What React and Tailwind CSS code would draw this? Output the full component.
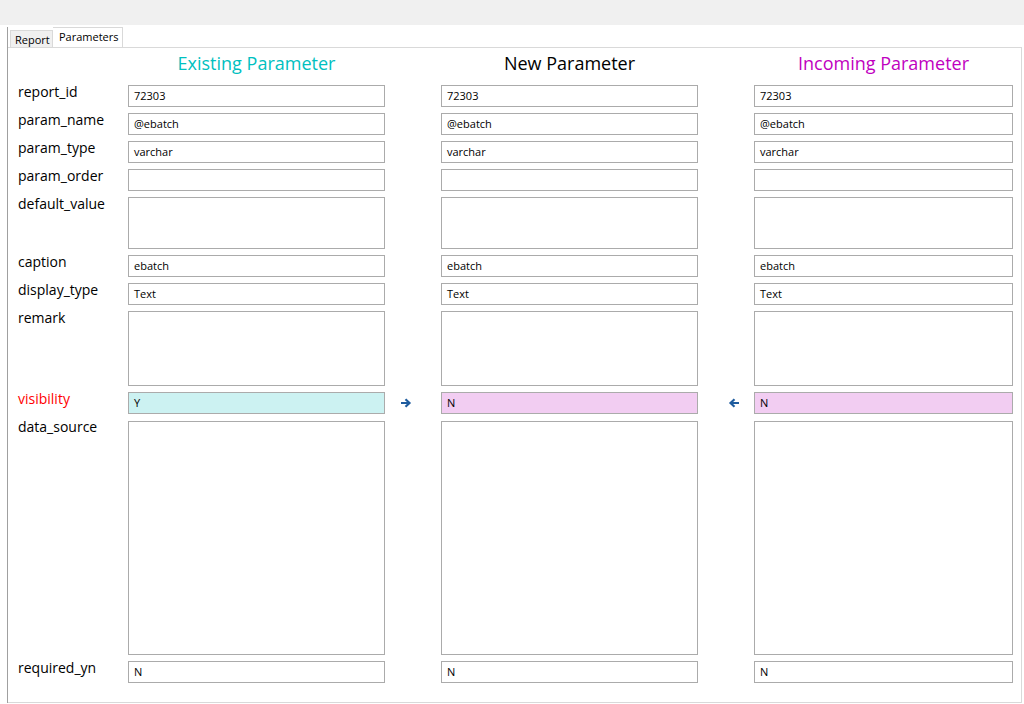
import React from 'react';

const rows = [
  { name: 'report_id', h: 'h-[22px]', values: ['72303', '72303', '72303'] },
  { name: 'param_name', h: 'h-[22px]', values: ['@ebatch', '@ebatch', '@ebatch'] },
  { name: 'param_type', h: 'h-[22px]', values: ['varchar', 'varchar', 'varchar'] },
  { name: 'param_order', h: 'h-[22px]', values: ['', '', ''] },
  { name: 'default_value', h: 'h-[52px]', values: ['', '', ''] },
  { name: 'caption', h: 'h-[22px]', values: ['ebatch', 'ebatch', 'ebatch'] },
  { name: 'display_type', h: 'h-[22px]', values: ['Text', 'Text', 'Text'] },
  { name: 'remark', h: 'h-[75px]', values: ['', '', ''] },
  { name: 'visibility', h: 'h-[22px]', values: ['Y', 'N', 'N'], changed: true },
  { name: 'data_source', h: 'h-[234px]', values: ['', '', ''], spaced: true },
  { name: 'required_yn', h: 'h-[22px]', values: ['N', 'N', 'N'] },
];

const ArrowRight = () => (
  <svg width="12" height="10" viewBox="0 0 12 10" className="text-[#1f5c9e]">
    <path d="M1 5 H9.5 M5.5 1.2 L9.5 5 L5.5 8.8" fill="none" stroke="currentColor" strokeWidth="2.2" />
  </svg>
);

const ArrowLeft = () => (
  <svg width="12" height="10" viewBox="0 0 12 10" className="text-[#1f5c9e]">
    <path d="M11 5 H2.5 M6.5 1.2 L2.5 5 L6.5 8.8" fill="none" stroke="currentColor" strokeWidth="2.2" />
  </svg>
);

const Field = ({ value, h, bg = 'bg-white', extra = '' }) => (
  <div className={`${h} ${bg} ${extra} border border-[#ababab] px-[5px] flex items-start`}>
    <span className="text-[11px] leading-[20px] text-black">{value}</span>
  </div>
);

export default function App() {
  return (
    <div className="w-[1024px] h-[704px] bg-white overflow-hidden font-['Open_Sans',sans-serif]">
      <div className="h-[25px] bg-[#f0f0f0]" />
      <div className="ml-[7px] mt-[2px] h-[676px] border-l border-[#a0a0a0] flex flex-col">
        {/* tab strip */}
        <div className="h-[20px] flex items-end pl-[2px]">
          <div className="w-[43px] h-[17px] bg-[#f0f0f0] border border-b-0 border-[#d9d9d9] text-[11px] leading-[17px] text-black pl-[4px]">
            Report
          </div>
          <div className="w-[70px] h-[20px] bg-white border border-b-0 border-l-0 border-[#d9d9d9] text-[11px] leading-[17px] text-black pl-[6px]">
            Parameters
          </div>
        </div>

        {/* parameter comparison panel */}
        <div className="w-[1014px] flex-1 border-t border-r border-b border-[#d9d9d9] pl-[10px]">
          <div className="grid grid-cols-[110px_257px_56px_257px_56px_259px] gap-y-[6px]">
            <div className="h-[31px]" />
            <div className="h-[31px] flex items-center justify-center text-[18px] text-[#00c0c0]">
              Existing Parameter
            </div>
            <div />
            <div className="h-[31px] flex items-center justify-center text-[18px] text-black">
              New Parameter
            </div>
            <div />
            <div className="h-[31px] flex items-center justify-center text-[18px] text-[#c000c0]">
              Incoming Parameter
            </div>

            {rows.map((row) => {
              const gap = row.spaced ? 'mt-[1px]' : '';
              return (
                <React.Fragment key={row.name}>
                  <div
                    className={`text-[14px] leading-[16px] -mt-[1px] ${
                      row.changed ? 'text-[#ff0000]' : 'text-black'
                    }`}
                  >
                    {row.name}
                  </div>
                  <Field value={row.values[0]} h={row.h} extra={gap} bg={row.changed ? 'bg-[#ccf2f2]' : 'bg-white'} />
                  <div className={`flex items-center justify-start pl-[15px] ${gap}`}>{row.changed && <ArrowRight />}</div>
                  <Field value={row.values[1]} h={row.h} extra={gap} bg={row.changed ? 'bg-[#f2cdf2]' : 'bg-white'} />
                  <div className={`flex items-center justify-end pr-[14px] ${gap}`}>{row.changed && <ArrowLeft />}</div>
                  <Field value={row.values[2]} h={row.h} extra={gap} bg={row.changed ? 'bg-[#f2cdf2]' : 'bg-white'} />
                </React.Fragment>
              );
            })}
          </div>
        </div>
      </div>
    </div>
  );
}
